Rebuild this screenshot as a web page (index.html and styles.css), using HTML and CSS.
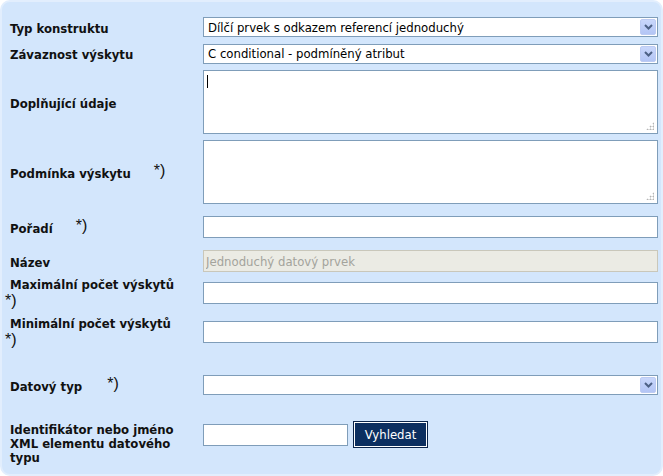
FILE: index.html
```html
<!DOCTYPE html>
<html>
<head>
    <meta charset="utf-8" />
    <title>Prvek</title>
    <link rel="stylesheet" href="styles.css">
</head>
<body>
    <div id="panel">
        <div class="row r1">
            <label>Typ konstruktu</label>
            <div class="combo">
                <span class="combo-text">Dílčí prvek s odkazem referencí jednoduchý</span>
                <span class="combo-btn"><svg width="9" height="6" viewBox="0 0 9 6"><path d="M1 1 L4.5 4.5 L8 1" fill="none" stroke="#4d6185" stroke-width="2"/></svg></span>
            </div>
        </div>
        <div class="row r2">
            <label>Závaznost výskytu</label>
            <div class="combo">
                <span class="combo-text">C conditional - podmíněný atribut</span>
                <span class="combo-btn"><svg width="9" height="6" viewBox="0 0 9 6"><path d="M1 1 L4.5 4.5 L8 1" fill="none" stroke="#4d6185" stroke-width="2"/></svg></span>
            </div>
        </div>
        <div class="row r3">
            <label>Doplňující údaje</label>
            <div class="area"><span class="caret"></span><span class="grip"></span></div>
        </div>
        <div class="row r4">
            <label>Podmínka výskytu <span class="req">*)</span></label>
            <div class="area"><span class="grip"></span></div>
        </div>
        <div class="row r5">
            <label>Pořadí <span class="req">*)</span></label>
            <input type="text" class="text">
        </div>
        <div class="row r6">
            <label>Název</label>
            <input type="text" class="text" value="Jednoduchý datový prvek" disabled>
        </div>
        <div class="row r7">
            <label>Maximální počet výskytů<br><span class="req req-wrap">*)</span></label>
            <input type="text" class="text">
        </div>
        <div class="row r8">
            <label>Minimální počet výskytů<br><span class="req req-wrap">*)</span></label>
            <input type="text" class="text">
        </div>
        <div class="row r9">
            <label>Datový typ <span class="req">*)</span></label>
            <div class="combo">
                <span class="combo-text"></span>
                <span class="combo-btn"><svg width="9" height="6" viewBox="0 0 9 6"><path d="M1 1 L4.5 4.5 L8 1" fill="none" stroke="#4d6185" stroke-width="2"/></svg></span>
            </div>
        </div>
        <div class="row r10">
            <label>Identifikátor nebo jméno XML elementu datového typu</label>
            <div class="search">
                <input type="text" class="text short">
                <button type="button">Vyhledat</button>
            </div>
        </div>
    </div>
</body>
</html>
```

FILE: styles.css
```css
*, *:before, *:after{
    box-sizing:border-box;
}
html, body{
    margin:0;
    background:#fff;
}
#panel{
    width:663px;
    height:476px;
    padding-top:12px;
    background:#d3e6fc;
    border:2px solid #e2eefd;
    border-radius:10px;
    font-family:"DejaVu Sans Condensed", "DejaVu Sans", sans-serif;
    font-stretch:condensed;
}
.row{
    display:grid;
    grid-template-columns:201px 455px;
    align-items:center;
}
    .row label{
        padding:3px 8px 0 8px;
        font-size:13px;
        font-weight:bold;
        line-height:14px;
        color:#111;
    }
.r1{ height:26px; }
.r2{ height:27px; }
.r3{ height:70px; }
.r4{ height:70px; }
.r5{ height:40px; }
.r6{ height:28px; }
.r7{ height:36px; }
.r8{ height:42px; }
.r9{ height:64px; }
.r10{ height:56px; }
.r7 label, .r8 label{
    line-height:16px;
    padding-top:0;
}
.req{
    font-family:"Liberation Sans", Arial, sans-serif;
    font-weight:normal;
    font-size:16px;
    margin-left:20px;
    position:relative;
    top:-2px;
}
.req-wrap{
    margin-left:-5px;
    top:0;
}
.r9 .req{ margin-left:21px; }
.r5 .req{ margin-left:19px; }
.r4 .req{ margin-left:19px; }
.combo{
    display:flex;
    align-items:center;
    height:20px;
    background:#fff;
    border:1px solid #7f9db9;
    padding:1px;
}
.combo-text{
    flex:1;
    padding-left:3px;
    font-size:13px;
    white-space:nowrap;
    overflow:hidden;
}
.combo-btn{
    display:flex;
    align-items:center;
    justify-content:center;
    width:16px;
    height:16px;
    background:linear-gradient(#c9d7fb, #b3c5f5);
    border:1px solid #bccbf3;
    border-radius:2px;
}
.area{
    position:relative;
    height:64px;
    background:#fff;
    border:1px solid #7f9db9;
}
.caret{
    position:absolute;
    left:3px;
    top:4px;
    width:1px;
    height:13px;
    background:#000;
}
.grip{
    position:absolute;
    right:3px;
    bottom:3px;
    width:8px;
    height:8px;
    background:
        radial-gradient(circle, #b5b5b5 0.8px, transparent 1.2px) 0 0/3px 3px;
    clip-path:polygon(100% 0, 100% 100%, 0 100%);
}
.text{
    width:455px;
    height:22px;
    margin:0;
    padding:0 2px;
    background:#fff;
    border:1px solid #7f9db9;
    font-family:"DejaVu Sans Condensed", "DejaVu Sans", sans-serif;
    font-stretch:condensed;
    font-size:13px;
}
    .text:disabled{
        background:#ebebe4;
        color:#a3a39c;
        border-color:#c9c7ba;
    }
.r10 label{
    align-self:start;
    padding-top:6px;
}
.search{
    display:flex;
    align-items:center;
    gap:5px;
    align-self:start;
    padding-top:4px;
}
.text.short{
    width:145px;
}
button{
    width:75px;
    height:27px;
    margin:0;
    padding:0;
    background:#0c2f60;
    color:#fff;
    border:1px solid #0a244b;
    box-shadow:inset 0 0 0 1px #fff;
    font-family:"DejaVu Sans Condensed", "DejaVu Sans", sans-serif;
    font-stretch:condensed;
    font-size:13px;
}
```
